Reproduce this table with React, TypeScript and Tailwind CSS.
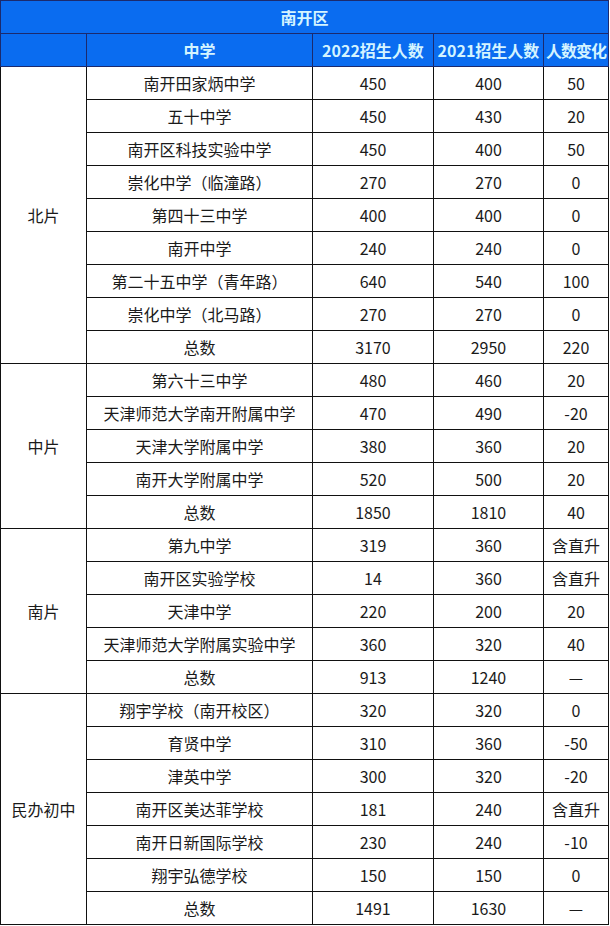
import React from 'react'

type Row = { name: string; y22: string; y21: string; diff: string }

const groups: Array<{ area: string; rows: Row[] }> = [
  {
    area: '北片',
    rows: [
      { name: '南开田家炳中学', y22: '450', y21: '400', diff: '50' },
      { name: '五十中学', y22: '450', y21: '430', diff: '20' },
      { name: '南开区科技实验中学', y22: '450', y21: '400', diff: '50' },
      { name: '崇化中学（临潼路）', y22: '270', y21: '270', diff: '0' },
      { name: '第四十三中学', y22: '400', y21: '400', diff: '0' },
      { name: '南开中学', y22: '240', y21: '240', diff: '0' },
      { name: '第二十五中学（青年路）', y22: '640', y21: '540', diff: '100' },
      { name: '崇化中学（北马路）', y22: '270', y21: '270', diff: '0' },
      { name: '总数', y22: '3170', y21: '2950', diff: '220' },
    ],
  },
  {
    area: '中片',
    rows: [
      { name: '第六十三中学', y22: '480', y21: '460', diff: '20' },
      { name: '天津师范大学南开附属中学', y22: '470', y21: '490', diff: '-20' },
      { name: '天津大学附属中学', y22: '380', y21: '360', diff: '20' },
      { name: '南开大学附属中学', y22: '520', y21: '500', diff: '20' },
      { name: '总数', y22: '1850', y21: '1810', diff: '40' },
    ],
  },
  {
    area: '南片',
    rows: [
      { name: '第九中学', y22: '319', y21: '360', diff: '含直升' },
      { name: '南开区实验学校', y22: '14', y21: '360', diff: '含直升' },
      { name: '天津中学', y22: '220', y21: '200', diff: '20' },
      { name: '天津师范大学附属实验中学', y22: '360', y21: '320', diff: '40' },
      { name: '总数', y22: '913', y21: '1240', diff: '—' },
    ],
  },
  {
    area: '民办初中',
    rows: [
      { name: '翔宇学校（南开校区）', y22: '320', y21: '320', diff: '0' },
      { name: '育贤中学', y22: '310', y21: '360', diff: '-50' },
      { name: '津英中学', y22: '300', y21: '320', diff: '-20' },
      { name: '南开区美达菲学校', y22: '181', y21: '240', diff: '含直升' },
      { name: '南开日新国际学校', y22: '230', y21: '240', diff: '-10' },
      { name: '翔宇弘德学校', y22: '150', y21: '150', diff: '0' },
      { name: '总数', y22: '1491', y21: '1630', diff: '—' },
    ],
  },
]

const cell = 'border border-[#111111] h-[33px] p-0 text-center align-middle'
const head = 'border border-[#1b2a6e] h-[33px] p-0 text-center align-middle'

export default function App() {
  return (
    <div className="w-[610px] h-[926px] bg-white" style={{ fontFamily: '"Noto Sans CJK SC", "Noto Sans", sans-serif' }}>
      <table className="w-[608px] table-fixed border-collapse text-[16px] leading-none text-[#1a1a1a]">
        <colgroup>
          <col className="w-[86px]" />
          <col className="w-[226px]" />
          <col className="w-[121px]" />
          <col className="w-[110px]" />
          <col className="w-[65px]" />
        </colgroup>
        <thead className="bg-[#0a6cf0] text-[#d4f4ff] font-bold">
          <tr>
            <th colSpan={5} className={head}>南开区</th>
          </tr>
          <tr>
            <th className={head}></th>
            <th className={head}>中学</th>
            <th className={head + ' whitespace-nowrap'}>2022招生人数</th>
            <th className={head + ' whitespace-nowrap'}>2021招生人数</th>
            <th className={head + ' whitespace-nowrap tracking-[-1px]'}>人数变化</th>
          </tr>
        </thead>
        <tbody>
          {groups.map((g) =>
            g.rows.map((r, i) => (
              <tr key={g.area + i}>
                {i === 0 && (
                  <td rowSpan={g.rows.length} className={cell}>{g.area}</td>
                )}
                <td className={cell + ' whitespace-nowrap'}>{r.name}</td>
                <td className={cell}>{r.y22}</td>
                <td className={cell}>{r.y21}</td>
                <td className={cell + ' whitespace-nowrap'}>{r.diff}</td>
              </tr>
            ))
          )}
        </tbody>
      </table>
    </div>
  )
}
